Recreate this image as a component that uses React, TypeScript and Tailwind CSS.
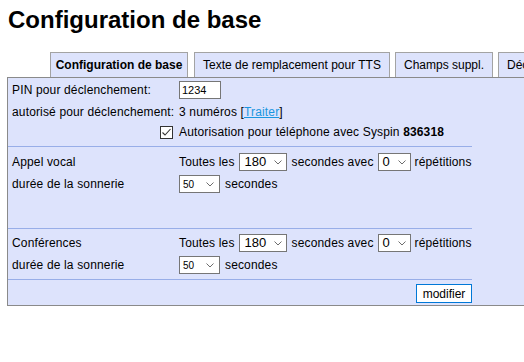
import React from "react";

const tabs = [
  { label: "Configuration de base", w: "w-[138px] justify-center", gap: "mr-[6px]", active: true },
  { label: "Texte de remplacement pour TTS", w: "w-[196px] justify-center", gap: "mr-[5px]", active: false },
  { label: "Champs suppl.", w: "w-[98px] justify-center", gap: "mr-[5px]", active: false },
  { label: "Déclenchement", w: "w-[120px] justify-start pl-[8px]", gap: "", active: false }
];

const Chevron = () => (
  <svg width="8" height="5" viewBox="0 0 8 5" className="shrink-0">
    <polyline points="0.5,0.5 4,4 7.5,0.5" fill="none" stroke="#6d6d6d" strokeWidth="1" />
  </svg>
);

// dropdown drawn like the Firefox/Windows one in the screenshot
const Select = ({ value, className }: { value: string; className: string }) => (
  <div className={"h-[18px] flex items-center justify-between border border-[#767676] bg-white shrink-0 tracking-normal " + className}>
    <span>{value}</span>
    <Chevron />
  </div>
);

const Separator = ({ className }: { className: string }) => (
  <div className={"h-px w-full bg-[#98aee8] " + className} />
);

const IntervalRow = ({ label, className }: { label: string; className: string }) => (
  <>
    <div className={"grid grid-cols-[171px_1fr] h-[22px] items-center " + className}>
      <span className="pl-[4px]">{label}</span>
      <div className="flex items-center gap-[4px]">
        <span>Toutes les</span>
        <Select value="180" className="w-[48px] pl-[5px] pr-[4px] text-[13px]" />
        <span className="ml-px">secondes avec</span>
        <Select value="0" className="w-[33px] pl-[4px] pr-[4px] text-[13px]" />
        <span>répétitions</span>
      </div>
    </div>
    <div className="grid grid-cols-[171px_1fr] h-[22px] items-center">
      <span className="pl-[4px]">durée de la sonnerie</span>
      <div className="flex items-center gap-[5px]">
        <Select value="50" className="w-[41px] pl-[3px] pr-[5px] text-[10px]" />
        <span>secondes</span>
      </div>
    </div>
  </>
);

export default function App() {
  return (
    <div className="w-[524px] h-[362px] overflow-hidden bg-white text-black font-['Liberation_Sans',Arial,sans-serif] px-[7px]">
      <h1 className="mt-[6px] pl-px text-[24px] leading-[28px] font-bold">Configuration de base</h1>

      {/* Tabs */}
      <div className="mt-[18px] flex pl-[43px] h-[25px] text-[12px] whitespace-nowrap">
        {tabs.map((t) => (
          <div
            key={t.label}
            className={`${t.w} ${t.gap} shrink-0 h-[25px] flex items-center border border-b-0 border-[#a3a3a3] bg-[#dde3fc] ${t.active ? "font-bold" : ""}`}
          >
            {t.label}
          </div>
        ))}
      </div>

      {/* Panel */}
      <div className="w-[600px] border border-[#8a8a8a] bg-[#dde3fc] pt-px pb-[2px] text-[12px] tracking-[0.15px]">
        <div className="w-[464px]">
          <div className="grid grid-cols-[171px_1fr] h-[22px] items-center">
            <span className="pl-[4px]">PIN pour déclenchement:</span>
            <div className="w-[42px] h-[18px] border border-[#767676] bg-white text-[11px] tracking-normal pl-[2px] flex items-center">1234</div>
          </div>
          <div className="grid grid-cols-[171px_1fr] h-[21px] items-center">
            <span className="pl-[4px]">autorisé pour déclenchement:</span>
            <span>
              3 numéros [<span className="text-[#1a96e0] underline">Traiter</span>]
            </span>
          </div>
          <div className="grid grid-cols-[171px_1fr] h-[20px] items-center">
            <div className="flex justify-end pr-[6px]">
              <span className="w-[13px] h-[13px] border border-[#333] bg-white flex items-center justify-center">
                <svg width="11" height="11" viewBox="0 0 11 11">
                  <polyline points="1.5,5.5 4,8 9.5,2" fill="none" stroke="#333" strokeWidth="1.1" />
                </svg>
              </span>
            </div>
            <span>
              Autorisation pour téléphone avec Syspin <b>836318</b>
            </span>
          </div>

          <Separator className="mt-[4px]" />
          <IntervalRow label="Appel vocal" className="mt-[4px]" />

          <Separator className="mt-[33px]" />
          <div className="mt-[3px]" />
          <IntervalRow label="Conférences" className="" />

          <Separator className="mt-[3px]" />
          <div className="mt-[4px] flex justify-end">
            <button className="w-[56px] h-[19px] border border-[#0078d7] bg-white text-[12px] tracking-normal leading-none">modifier</button>
          </div>
        </div>
      </div>
    </div>
  );
}
